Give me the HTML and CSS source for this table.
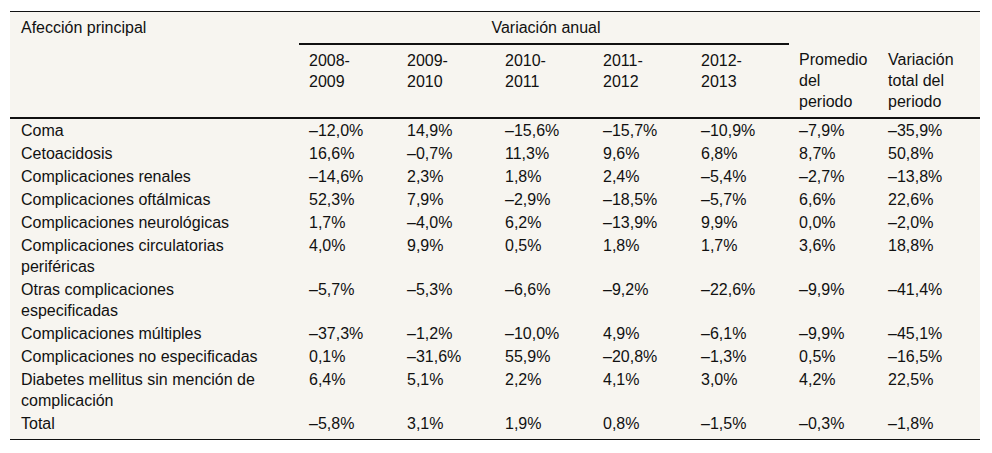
FILE: index.html
```html
<!DOCTYPE html>
<html lang="es">
<head>
<meta charset="utf-8">
<title>Variación anual</title>
<link rel="stylesheet" href="styles.css">
</head>
<body>
<table class="data-table">
  <colgroup>
    <col class="c-first">
    <col class="c-year"><col class="c-year"><col class="c-year"><col class="c-year"><col class="c-year">
    <col class="c-avg">
    <col class="c-total">
  </colgroup>
  <thead>
    <tr>
      <th rowspan="2" class="first">Afección principal</th>
      <th colspan="5" class="group">Variación anual</th>
      <th></th>
      <th></th>
    </tr>
    <tr class="sub">
      <th>2008-<br>2009</th>
      <th>2009-<br>2010</th>
      <th>2010-<br>2011</th>
      <th>2011-<br>2012</th>
      <th>2012-<br>2013</th>
      <th>Promedio del periodo</th>
      <th>Variación total del periodo</th>
    </tr>
  </thead>
  <tbody>
    <tr><td class="first">Coma</td><td>–12,0%</td><td>14,9%</td><td>–15,6%</td><td>–15,7%</td><td>–10,9%</td><td>–7,9%</td><td>–35,9%</td></tr>
    <tr><td class="first">Cetoacidosis</td><td>16,6%</td><td>–0,7%</td><td>11,3%</td><td>9,6%</td><td>6,8%</td><td>8,7%</td><td>50,8%</td></tr>
    <tr><td class="first">Complicaciones renales</td><td>–14,6%</td><td>2,3%</td><td>1,8%</td><td>2,4%</td><td>–5,4%</td><td>–2,7%</td><td>–13,8%</td></tr>
    <tr><td class="first">Complicaciones oftálmicas</td><td>52,3%</td><td>7,9%</td><td>–2,9%</td><td>–18,5%</td><td>–5,7%</td><td>6,6%</td><td>22,6%</td></tr>
    <tr><td class="first">Complicaciones neurológicas</td><td>1,7%</td><td>–4,0%</td><td>6,2%</td><td>–13,9%</td><td>9,9%</td><td>0,0%</td><td>–2,0%</td></tr>
    <tr><td class="first">Complicaciones circulatorias periféricas</td><td>4,0%</td><td>9,9%</td><td>0,5%</td><td>1,8%</td><td>1,7%</td><td>3,6%</td><td>18,8%</td></tr>
    <tr><td class="first">Otras complicaciones especificadas</td><td>–5,7%</td><td>–5,3%</td><td>–6,6%</td><td>–9,2%</td><td>–22,6%</td><td>–9,9%</td><td>–41,4%</td></tr>
    <tr><td class="first">Complicaciones múltiples</td><td>–37,3%</td><td>–1,2%</td><td>–10,0%</td><td>4,9%</td><td>–6,1%</td><td>–9,9%</td><td>–45,1%</td></tr>
    <tr><td class="first">Complicaciones no especificadas</td><td>0,1%</td><td>–31,6%</td><td>55,9%</td><td>–20,8%</td><td>–1,3%</td><td>0,5%</td><td>–16,5%</td></tr>
    <tr><td class="first">Diabetes mellitus sin mención de complicación</td><td>6,4%</td><td>5,1%</td><td>2,2%</td><td>4,1%</td><td>3,0%</td><td>4,2%</td><td>22,5%</td></tr>
    <tr class="total"><td class="first">Total</td><td>–5,8%</td><td>3,1%</td><td>1,9%</td><td>0,8%</td><td>–1,5%</td><td>–0,3%</td><td>–1,8%</td></tr>
  </tbody>
</table>
</body>
</html>
```
FILE: styles.css
```css
html, body {
  margin: 0;
  padding: 0;
  background: #ffffff;
}
body {
  padding: 11px 12px 0 10px;
  font-family: "Liberation Sans", Arial, sans-serif;
  font-size: 16px;
  color: #111;
}
.data-table {
  width: 970px;
  table-layout: fixed;
  border-collapse: collapse;
  background: #f7f5f0;
  border-top: 1px solid #111;
  border-bottom: 1px solid #111;
}
.c-first { width: 289px; }
.c-year { width: 98px; }
.c-avg { width: 89px; }
.c-total { width: 102px; }
.data-table th,
.data-table td {
  text-align: left;
  vertical-align: top;
  font-weight: normal;
  line-height: 21px;
  padding: 1px 6px 1px 10px;
}
.data-table th {
  padding-top: 5px;
  padding-bottom: 5px;
}
.data-table thead {
  border-bottom: 2px solid #111;
}
.data-table th.group {
  text-align: center;
  border-bottom: 2px solid #111;
}
.data-table .first {
  padding-left: 11px;
  padding-right: 32px;
}
.data-table .total td {
  padding-bottom: 5px;
}
```
